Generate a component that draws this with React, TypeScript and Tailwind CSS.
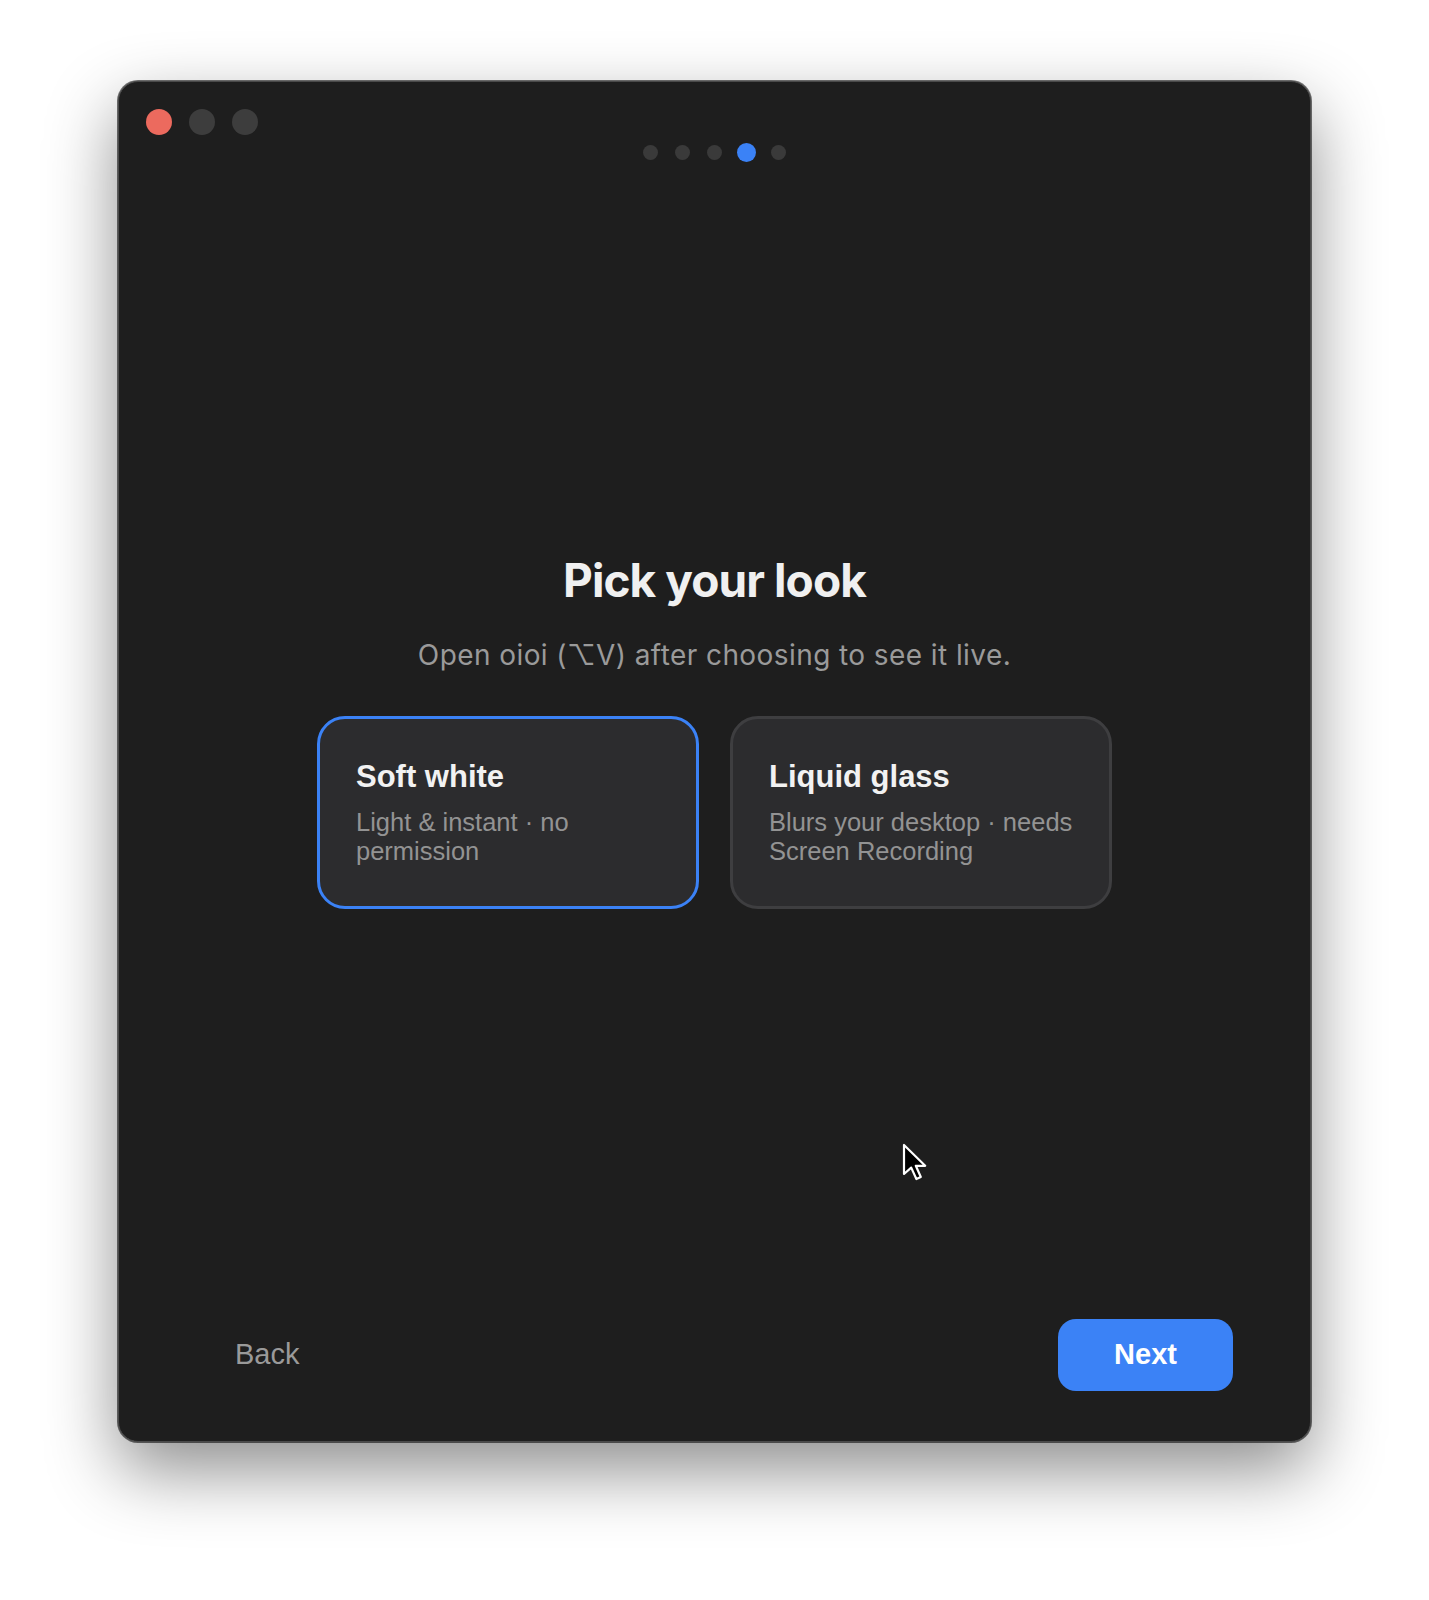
import { useState } from 'react';

const STEPS = 5;

const looks = [
  { id: 'soft', title: 'Soft white', desc: 'Light & instant · no permission' },
  { id: 'glass', title: 'Liquid glass', desc: 'Blurs your desktop · needs Screen Recording' },
];

export default function App() {
  const [selected, setSelected] = useState('soft');
  const step = 3;

  return (
    <div className="min-h-[1600px] bg-white pt-[81px]">
      <div className="relative mx-auto flex h-[1361px] w-[1193px] flex-col rounded-[20px] border border-[#4a4a4a] bg-[#1e1e1e] shadow-[0_28px_70px_rgba(0,0,0,0.45),0_0_0_1px_rgba(0,0,0,0.55)]">
        {/* Traffic lights */}
        <div className="flex gap-[17px] pl-[27px] pt-[27px]">
          <span className="h-[26px] w-[26px] rounded-full bg-[#ec6a5e]" />
          <span className="h-[26px] w-[26px] rounded-full bg-[#3d3d3d]" />
          <span className="h-[26px] w-[26px] rounded-full bg-[#3d3d3d]" />
        </div>

        {/* Step dots */}
        <div className="mt-[8px] flex justify-center">
          {Array.from({ length: STEPS }).map((_, i) => (
            <div key={i} className="flex h-[19px] w-[32px] items-center justify-center">
              <span
                className={
                  i === step
                    ? 'h-[19px] w-[19px] rounded-full bg-[#3b82f6]'
                    : 'h-[15px] w-[15px] rounded-full bg-[#3a3a3a]'
                }
              />
            </div>
          ))}
        </div>

        {/* Main */}
        <div className="mt-[395px] flex flex-col items-center font-['Inter',sans-serif]">
          <h1 className="text-[46px] font-bold leading-[46px] tracking-[-0.02em] text-[#f0f0f0]">
            Pick your look
          </h1>
          <p className="mt-[38px] text-[28px] leading-[28px] tracking-[0.015em] text-[#9a9a9a]">
            Open oioi (⌥V) after choosing to see it live.
          </p>

          <div className="mt-[47px] flex gap-[31px] font-['Liberation_Sans',Arial,sans-serif]">
            {looks.map(look => (
              <div
                key={look.id}
                role="button"
                onClick={() => setSelected(look.id)}
                className={
                  'h-[193px] w-[382px] cursor-pointer rounded-[28px] border-[3px] bg-[#2c2c2e] pl-[36px] pr-[33px] pt-[42px] ' +
                  (selected === look.id ? 'border-[#3b82f6]' : 'border-[#3e3e40]')
                }
              >
                <div className="text-[31px] font-bold leading-[31px] text-[#f2f2f2]">{look.title}</div>
                <div className="mt-[16px] text-[25.5px] leading-[29px] text-[#939393]">{look.desc}</div>
              </div>
            ))}
          </div>
        </div>

        {/* Footer */}
        <div className="mt-auto flex items-center justify-between pl-[78px] pr-[77px] pb-[50px] font-['Liberation_Sans',Arial,sans-serif]">
          <button className="flex h-[72px] items-center px-[38px] text-[29px] text-[#9a9a9a]">Back</button>
          <button className="flex h-[72px] w-[175px] items-center justify-center rounded-[18px] bg-[#3b82f6] text-[29px] font-bold text-white">
            Next
          </button>
        </div>

        {/* Mouse pointer */}
        <svg
          className="pointer-events-none absolute left-[783px] top-[1061px]"
          width="26"
          height="38"
          viewBox="0 0 13 19"
        >
          <path
            d="M1 1 L1 15.5 L4.6 12.3 L7.2 18 L9.4 17 L6.9 11.4 L11.6 11.4 Z"
            fill="#000"
            stroke="#fff"
            strokeWidth="1.1"
            strokeLinejoin="round"
          />
        </svg>
      </div>
    </div>
  );
}
